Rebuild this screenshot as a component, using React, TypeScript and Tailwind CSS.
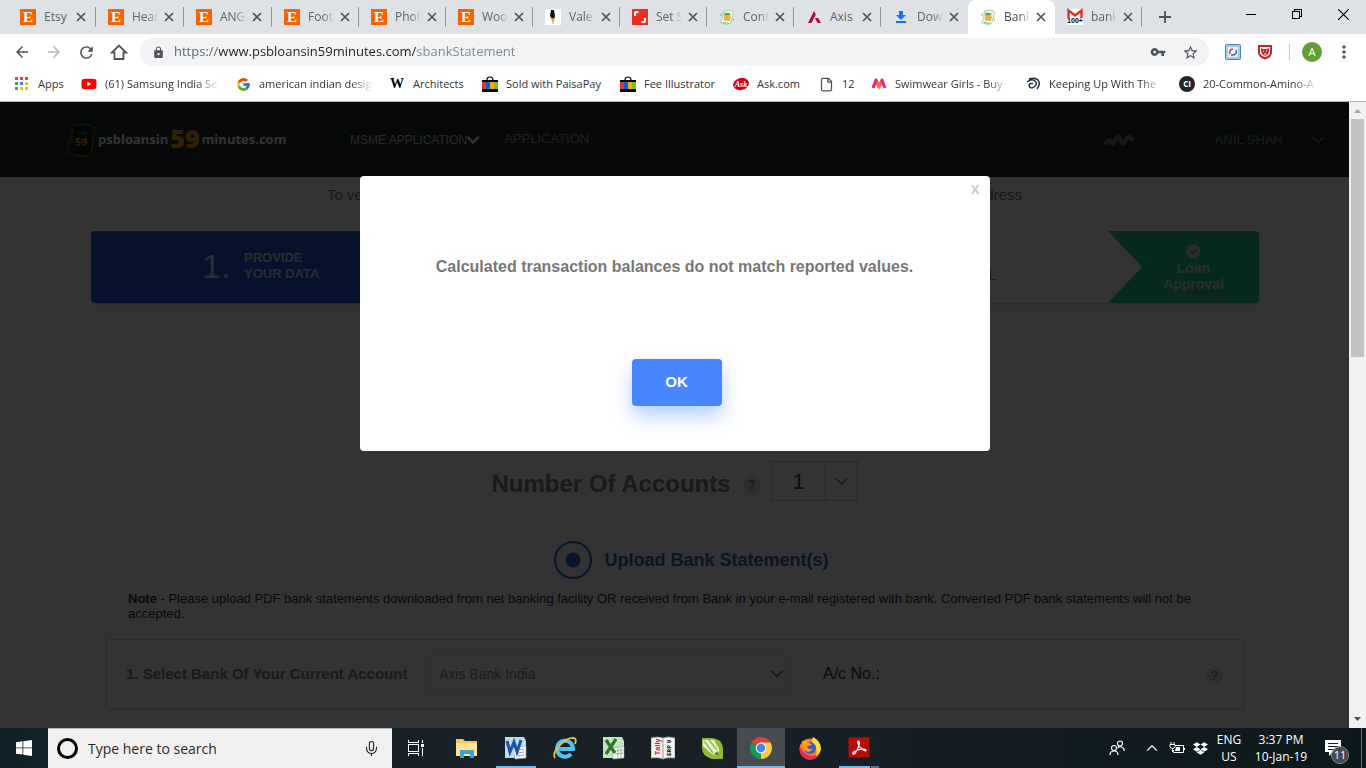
import React from "react";
import { ChevronDown, ChevronUp, File, Mic } from "lucide-react";
import { FcGoogle } from "react-icons/fc";
import { FaDropbox, FaYoutube } from "react-icons/fa";
import {
  MdArrowBack,
  MdArrowForward,
  MdLock,
  MdMoreVert,
  MdRefresh,
  MdStarBorder,
  MdVerified,
  MdVpnKey,
} from "react-icons/md";

function EtsyIcon() {
  return (
    <span className="flex size-4 items-center justify-center bg-[#f56400] font-['Liberation_Serif',serif] text-[15px] leading-4 font-bold text-white">
      E
    </span>
  );
}

function PenIcon() {
  return (
    <svg viewBox="0 0 16 16" className="size-4 bg-white">
      <path d="M6 1h3l1 6-1 3H7L5 7z" fill="#111" />
      <path d="M6 9h4l-1 3-1 4-1-4z" fill="#d9a441" />
    </svg>
  );
}

function ShutterIcon() {
  return (
    <svg viewBox="0 0 16 16" className="size-4 bg-[#ee2e24]">
      <path d="M6.500 3H4.500Q3 3 3 4.500V7M9.500 13h2q1.500 0 1.500-1.500V9" fill="none" stroke="#fff" strokeWidth="2.200" />
    </svg>
  );
}

function NotesIcon() {
  return (
    <svg viewBox="0 0 16 16" className="size-4">
      <path d="M4.500 2l6-1 4 1.500-1 6-2 6-4 1-6-2 2-4z" fill="#f3f7ea" stroke="#a5cc86" strokeWidth=".9" />
      <path d="M5 3.500l6.500.5-.5 8-6-.5z" fill="#a9bfa0" />
      <path d="M6 5l4.500.3" stroke="#3d9a51" strokeWidth="1.500" />
      <path d="M5 7h6.500v3H5z" fill="#f2b13b" />
      <path d="M2.500 4.500L1.500 7M14 9.500l.5 2M4 13.500l6 1" stroke="#7dbb5f" />
    </svg>
  );
}

function AxisIcon() {
  return (
    <svg viewBox="0 0 16 16" className="size-4">
      <path d="M8 2L2 14h3.500L9.800 5.500zM8.800 9h3.400L15 14h-3.400z" fill="#ae0a4b" />
    </svg>
  );
}

function DownloadIcon() {
  return (
    <svg viewBox="0 0 16 16" className="size-4">
      <path d="M6 2h4v4h3l-5 5-5-5h3zM3 12h10v2H3z" fill="#1a73e8" />
    </svg>
  );
}

function GmailIcon() {
  return (
    <svg viewBox="0 0 16 16" className="size-4 overflow-visible">
      <rect x="0" y="0" width="16" height="16" fill="#fff" />
      <path d="M1.500 9V1.500L8 6.500l6.500-5V9" fill="none" stroke="#d93025" strokeWidth="2.400" />
      <text x="8" y="14" textAnchor="middle" fontSize="7" fontWeight="700" fontFamily="Liberation Sans, sans-serif" fill="#000">
        100+
      </text>
    </svg>
  );
}

const tabs: { title: string; icon: React.ReactNode; active?: boolean; fade?: boolean }[] = [
  { title: "Etsy", icon: <EtsyIcon /> },
  { title: "Hear", icon: <EtsyIcon />, fade: true },
  { title: "ANG", icon: <EtsyIcon />, fade: true },
  { title: "Foot", icon: <EtsyIcon />, fade: true },
  { title: "Phot", icon: <EtsyIcon />, fade: true },
  { title: "Woo", icon: <EtsyIcon />, fade: true },
  { title: "Vale", icon: <PenIcon />, fade: true },
  { title: "Set S", icon: <ShutterIcon />, fade: true },
  { title: "Cont", icon: <NotesIcon />, fade: true },
  { title: "Axis", icon: <AxisIcon /> },
  { title: "Dow", icon: <DownloadIcon />, fade: true },
  { title: "Bank", icon: <NotesIcon />, active: true, fade: true },
  { title: "bank", icon: <GmailIcon />, fade: true },
];

function TabStrip() {
  return (
    <div className="flex h-[34px] items-stretch bg-[#dee1e6] pl-2">
      {tabs.map((tab, i) => (
        <div
          key={i}
          className={`flex shrink-0 items-center pl-3 ${i < 3 ? "w-[88px]" : "w-[87px]"} ${
            tab.active ? "rounded-t-lg bg-white" : ""
          }`}
        >
          {tab.icon}
          <span
            className={`ml-2 w-[26px] shrink-0 overflow-hidden text-[12px] whitespace-nowrap ${
              tab.fade ? "[mask-image:linear-gradient(to_right,black_60%,transparent)]" : ""
            } ${tab.active ? "text-[#45484c]" : "text-[#5f6368]"}`}
          >
            {tab.title}
          </span>
          <button aria-label={`Close ${tab.title}`} className="ml-[6px] flex size-[10px] items-center justify-center">
            <svg viewBox="0 0 10 10" className="size-[10px]">
              <path d="M1 1l8 8M9 1l-8 8" stroke="#505357" strokeWidth="1.700" />
            </svg>
          </button>
          {!tab.active && i !== 10 && <span className="ml-auto h-5 w-px bg-[#92969b]" />}
        </div>
      ))}
      <button aria-label="New tab" className="ml-[17px] flex items-center">
        <svg viewBox="0 0 12 12" className="size-3">
          <path d="M6 0v12M0 6h12" stroke="#505357" strokeWidth="1.800" />
        </svg>
      </button>
      <div className="ml-auto flex h-7">
        <button aria-label="Minimize" className="flex w-[46px] items-center justify-center">
          <span className="h-px w-[10px] bg-black" />
        </button>
        <button aria-label="Restore" className="flex w-[46px] items-center justify-center">
          <svg viewBox="0 0 10 10" className="size-[10px]" shapeRendering="crispEdges">
            <path d="M.5 2.500h7v7h-7zM2.500 2.500v-2h7v7h-2" fill="none" stroke="#000" />
          </svg>
        </button>
        <button aria-label="Close window" className="flex w-[46px] items-center justify-center">
          <svg viewBox="0 0 10 10" className="size-[11px]">
            <path d="M0 0l10 10M10 0L0 10" stroke="#000" strokeWidth="1.100" />
          </svg>
        </button>
      </div>
    </div>
  );
}

function Toolbar() {
  return (
    <div className="flex h-9 items-center bg-white pr-3 pl-[13px] text-[#505357]">
      <div className="flex gap-[14px]">
        <button aria-label="Back">
          <MdArrowBack size={18} />
        </button>
        <button aria-label="Forward" className="text-[#b5b7ba]">
          <MdArrowForward size={18} />
        </button>
        <button aria-label="Reload">
          <MdRefresh size={19} />
        </button>
        <button aria-label="Home">
          <svg viewBox="0 0 18 18" className="size-[18px]">
            <path d="M2 9.500L9 2.500l7 7h-2.500V16h-9V9.500z" fill="none" stroke="currentColor" strokeWidth="1.800" />
          </svg>
        </button>
      </div>
      <div className="ml-3 flex h-7 flex-1 items-center rounded-full bg-[#f1f3f4] pr-[10px] pl-3">
        <MdLock size={13} />
        <input
          aria-label="Address"
          readOnly
          value="https://www.psbloansin59minutes.com/sbankStatement"
          className="ml-[9px] flex-1 bg-[linear-gradient(to_right,#5f6368_45px,#202124_45px,#202124_242px,#80868b_242px)] bg-clip-text text-[13px] text-transparent outline-none"
        />
        <button aria-label="Saved passwords">
          <MdVpnKey size={16} />
        </button>
        <button aria-label="Bookmark this page" className="ml-4">
          <MdStarBorder size={17} />
        </button>
      </div>
      <button aria-label="Page refresh extension" className="ml-4">
        <svg viewBox="0 0 16 16" className="size-4">
          <rect x=".5" y=".5" width="15" height="15" rx="1" fill="#a9cbe8" stroke="#5580a8" />
          <rect x="3" y="3" width="10" height="10" fill="#e5f1fb" />
          <path d="M5 10a3.400 3.400 0 0 1 3-5" fill="none" stroke="#d33" strokeWidth="1.500" />
          <path d="M11 6a3.400 3.400 0 0 1-3 5H6" fill="none" stroke="#236bc4" strokeWidth="1.500" />
        </svg>
      </button>
      <button aria-label="Shield extension" className="ml-4">
        <svg viewBox="0 0 16 16" className="size-4">
          <path d="M1 1h14v8q-1 5-7 6.500Q2 14 1 9z" fill="#c9252b" />
          <path d="M3 3h10v6q-1 3-5 4-4-1-5-4z" fill="#fff" />
          <path d="M4 4l2 1h4l2-1v3l-1 3-3 2-3-2-1-3z" fill="#c9252b" />
          <path d="M6 7h1M9 7h1M7 10h2" stroke="#fff" />
        </svg>
      </button>
      <span className="ml-4 h-4 w-px bg-[#c9ccd0]" />
      <button className="ml-3 size-5 rounded-full bg-[#5f9f34] text-[11px] leading-5 text-white">A</button>
      <button aria-label="Menu" className="ml-3">
        <MdMoreVert size={20} />
      </button>
    </div>
  );
}

function AppsIcon() {
  const colors = ["#e94235", "#e94235", "#e94235", "#34a853", "#4285f4", "#fbbc05", "#34a853", "#fbbc05", "#fbbc05"];
  return (
    <svg viewBox="0 0 16 16" className="size-4" shapeRendering="crispEdges">
      {colors.map((c, i) => (
        <rect key={i} x={1 + (i % 3) * 5} y={1 + Math.floor(i / 3) * 5} width="3" height="3" fill={c} />
      ))}
    </svg>
  );
}

function BagIcon() {
  return (
    <svg viewBox="0 0 16 16" className="size-4">
      <path d="M5 4q0-3 3-3t3 3" fill="none" stroke="#000" strokeWidth="1.200" />
      <path d="M0 4h16v12H0z" fill="#000" />
      <path d="M0 6h4v7H0z" fill="#e53238" />
      <path d="M4 6h4v7H4z" fill="#0064d2" />
      <path d="M8 6h4v7H8z" fill="#f5af02" />
      <path d="M12 6h4v7h-4z" fill="#86b817" />
    </svg>
  );
}

function AskIcon() {
  return (
    <svg viewBox="0 0 16 16" className="size-4">
      <ellipse cx="8" cy="8" rx="8" ry="6" fill="#d0021b" transform="rotate(-14 8 8)" />
      <text x="8" y="11" textAnchor="middle" fontSize="8" fontWeight="700" fontStyle="italic" fontFamily="Liberation Serif, serif" fill="#fff">
        Ask
      </text>
    </svg>
  );
}

function MyntraIcon() {
  return (
    <svg viewBox="0 0 16 16" className="size-4">
      <path d="M2 12L5 4l3 7" fill="none" stroke="#e6207d" strokeWidth="3" strokeLinejoin="round" />
      <path d="M8 11l3-7 3 8" fill="none" stroke="#f01fa0" strokeWidth="3" strokeLinejoin="round" />
      <path d="M6 6l2 5 2-5" fill="none" stroke="#f7752e" strokeWidth="2.500" />
    </svg>
  );
}

function SwirlIcon() {
  return (
    <svg viewBox="0 0 16 16" className="size-4" fill="none" stroke="#1f2a44" strokeWidth="1.500">
      <path d="M4 3q6-2 9 1 3 4-1 9M2 6q5-4 8-1t-1 6q-3 2-4.500-.500T6 7.500h2" />
    </svg>
  );
}

const bookmarks = [
  { label: "Apps", width: "w-[67px]", icon: <AppsIcon /> },
  { label: "(61) Samsung India Se", width: "w-[154px]", icon: <FaYoutube size={16} color="#f00" />, fade: true },
  { label: "american indian design", width: "w-[154px]", icon: <FcGoogle size={15} />, fade: true },
  {
    label: "Architects",
    width: "w-[93px]",
    icon: <span className="font-['Liberation_Serif',serif] text-[14px] leading-4 font-bold text-black">W</span>,
  },
  { label: "Sold with PaisaPay", width: "w-[138px]", icon: <BagIcon /> },
  { label: "Fee Illustrator", width: "w-[113px]", icon: <BagIcon /> },
  { label: "Ask.com", width: "w-[85px]", icon: <AskIcon /> },
  { label: "12", width: "w-[53px]", icon: <File size={15} strokeWidth={2} color="#505357" /> },
  { label: "Swimwear Girls - Buy", width: "w-[154px]", icon: <MyntraIcon />, fade: true },
  { label: "Keeping Up With The", width: "w-[154px]", icon: <SwirlIcon />, fade: true },
  {
    label: "20-Common-Amino-A",
    width: "w-[141px]",
    icon: (
      <span className="flex size-4 items-center justify-center rounded-full bg-[#222529] text-[8px] font-bold text-white">
        CI
      </span>
    ),
    fade: true,
  },
];

function BookmarksBar() {
  return (
    <nav className="flex h-8 items-center border-b border-[#b6b6b6] bg-white pb-[3px] pl-[14px] text-[11px] text-[#303336]">
      {bookmarks.map((b) => (
        <a key={b.label} href="#" className={`flex shrink-0 items-center gap-2 ${b.width}`}>
          <span className="flex w-4 shrink-0 justify-center">{b.icon}</span>
          <span
            className={
              b.fade
                ? "w-[114px] overflow-hidden whitespace-nowrap [mask-image:linear-gradient(to_right,black_80%,transparent)]"
                : "whitespace-nowrap"
            }
          >
            {b.label}
          </span>
        </a>
      ))}
    </nav>
  );
}

function SiteHeader() {
  return (
    <header className="flex h-[75px] items-center bg-[#1e2d28] pr-[21px] pl-[66px] text-[#ccc]">
      <a href="#" className="flex w-[220px] items-center font-['Open_Sans',sans-serif] text-[13px] font-bold text-white">
        <svg viewBox="0 0 30 36" className="h-9 w-[30px] shrink-0">
          <path d="M5 4l16-2 8 4-4 26-10 3L1 31 7 8z" fill="none" stroke="#5c8c32" />
          <path d="M14 1l12 4M2 12l4-4M26 22l2 2M3 17l3-3M24 26l3-2M8 30l8 4" stroke="#5c8c32" />
          <rect x="8" y="4" width="17" height="28" fill="#101a1c" />
          <text x="16" y="13" textAnchor="middle" fontSize="5" fontWeight="700" fill="#1c8040">
            PSB
          </text>
          <text x="15" y="24" textAnchor="middle" fontSize="11" fontWeight="700" fill="#f59a00">
            59
          </text>
        </svg>
        <span className="ml-[2px]">psbloansin</span>
        <span className="mx-[2px] pb-1 text-[25px] leading-8 font-extrabold text-[#ffa000]">59</span>
        <span>minutes.com</span>
      </a>
      <a href="#" className="ml-16 flex items-center text-[12px]">
        MSME APPLICATION
        <ChevronDown size={20} strokeWidth={3} className="-ml-1 text-white" />
      </a>
      <a href="#" className="ml-2 border-l border-[#2a3a35] pb-[2px] pl-3 text-[13px] leading-4 text-[#999]">
        APPLICATION
      </a>
      <svg viewBox="0 0 30 14" className="ml-auto h-[14px] w-[30px]">
        <path d="M2 10l4-3 3 4 5-8 5 8 6-8 3 3" fill="none" stroke="#777" strokeWidth="4" strokeLinecap="round" strokeLinejoin="round" />
      </svg>
      <button className="ml-[81px] flex items-center gap-[25px] text-[13px] text-[#7c7c9f]">
        ANIL SHAH
        <ChevronDown size={20} strokeWidth={2} />
      </button>
    </header>
  );
}

function Steps() {
  return (
    <ol className="mt-[27px] mr-[90px] ml-[91px] flex h-[72px] overflow-hidden rounded bg-white text-[14px] leading-4 shadow-[0_1px_2px_#8888]">
      <li className="flex w-1/3 items-center bg-linear-to-b from-[#205ac8] to-[#205ae1] pb-[2px] pl-[111px] text-[13px] leading-4 font-bold text-[#ddd]">
        <span className="w-[42px] text-[34px] font-normal">1.</span>
        <span>
          PROVIDE
          <br />
          YOUR DATA
        </span>
      </li>
      <li className="flex flex-1 items-center justify-end pr-[112px] text-[#777]">
        <span>
          GET
          <br />
          APPROVAL
        </span>
      </li>
      <li className="flex w-[151px] flex-col items-center justify-center bg-[#1ecd8c] pl-5 text-center font-bold text-[#ddd] [clip-path:polygon(0_0,100%_0,100%_100%,0_100%,34px_50%)]">
        <MdVerified size={17} />
        <span>
          Loan
          <br />
          Approval
        </span>
      </li>
    </ol>
  );
}

function Help() {
  return (
    <button
      aria-label="Help"
      className="size-[18px] rounded-full bg-[#e6e6e6] text-center text-[12px] leading-[18px] text-[#777]"
    >
      ?
    </button>
  );
}

function SitePage() {
  return (
    <div className="bg-white">
      <SiteHeader />
      <p className="mx-auto mt-[10px] flex h-[17px] max-w-[695px] items-center justify-between text-[15px] text-[#777]">
        <span>To verify</span>
        <span>address</span>
      </p>
      <Steps />
      <div className="mt-[158px] flex items-start justify-center">
        <label htmlFor="accounts" className="pt-[9px] text-[24px] leading-7 font-bold text-[#808080]">
          Number Of Accounts
        </label>
        <span className="mt-[15px] mr-[10px] ml-3 flex font-bold">
          <Help />
        </span>
        <div className="grid h-10 w-[87px] grid-cols-[53px_32px] border border-[#c8c8c8]">
          <select
            id="accounts"
            className="col-span-2 col-start-1 row-start-1 appearance-none pl-[21px] text-[22px] text-[#444] outline-none"
          >
            <option>1</option>
          </select>
          <span className="pointer-events-none col-start-2 row-start-1 flex items-center justify-center border-l border-[#c8c8c8] text-[#666]">
            <ChevronDown size={21} strokeWidth={1.500} />
          </span>
        </div>
      </div>
      <div className="mt-10 flex justify-center">
        <label className="ml-[34px] flex items-center gap-3 text-[18px] font-bold text-[#3268c8]">
          <input
            type="radio"
            name="source"
            defaultChecked
            className="size-[38px] appearance-none rounded-full border-2 border-[#3268d8] bg-[radial-gradient(circle,#3268d8_7px,transparent_8px)]"
          />
          Upload Bank Statement(s)
        </label>
      </div>
      <p className="mr-32 ml-[128px] pt-3 text-[13px] leading-[15px] text-[#333]">
        <b>Note</b> - Please upload PDF bank statements downloaded from net banking facility OR received from Bank in
        your e-mail registered with bank. Converted PDF bank statements will not be accepted.
      </p>
      <section className="mt-[18px] mr-[105px] ml-[106px] flex h-[70px] items-center rounded border border-[#d4d4d4] pr-5 pl-[19px] shadow-[0_1px_3px_#aaa8]">
        <label htmlFor="bank" className="w-[302px] text-[15px] font-bold whitespace-nowrap text-[#808080]">
          1. Select Bank Of Your Current Account
        </label>
        <div className="grid w-[363px] items-center">
          <select
            id="bank"
            className="col-start-1 row-start-1 h-[38px] w-full appearance-none border border-[#ececec] pl-[10px] text-[14px] text-[#909090]"
          >
            <option>Axis Bank India</option>
          </select>
          <ChevronDown
            size={20}
            strokeWidth={2}
            className="pointer-events-none col-start-1 row-start-1 mr-1 justify-self-end text-[#666]"
          />
        </div>
        <span className="ml-8 text-[16px] text-[#333]">A/c No.:</span>
        <span className="ml-auto flex pt-1">
          <Help />
        </span>
      </section>
      <div className="mr-[104px] ml-[105px] h-12 border-x border-[#f0f0f0]" />
    </div>
  );
}

function AlertDialog() {
  return (
    <div className="absolute inset-0 flex items-start justify-center bg-black/80 pt-[74px]">
      <div
        role="dialog"
        aria-modal="true"
        aria-label="Message"
        className="flex h-[275px] w-[630px] flex-col items-center rounded bg-white"
      >
        <button aria-label="Close message" className="mt-1 mr-[10px] self-end text-[13px] leading-5 font-bold text-[#c8c8c8]">
          X
        </button>
        <p className="mt-[57px] text-[16px] leading-5 font-bold text-[#777]">
          Calculated transaction balances do not match reported values.
        </p>
        <button className="mt-[82px] ml-1 h-[47px] w-[90px] rounded bg-[#4886ff] text-[15px] font-bold text-white shadow-[0_10px_20px_#4886ff66]">
          OK
        </button>
      </div>
    </div>
  );
}

function ScrollBar() {
  return (
    <div className="flex w-[17px] shrink-0 flex-col items-center bg-[#f1f1f1]">
      <svg viewBox="0 0 17 17" className="size-[17px]">
        <path d="M5 11h7L8.500 7z" fill="#a3a3a3" />
      </svg>
      <div className="h-[238px] w-[13px] bg-[#c1c1c1]" />
      <svg viewBox="0 0 17 17" className="mt-auto size-[17px]">
        <path d="M5 6h7l-3.500 4z" fill="#505050" />
      </svg>
    </div>
  );
}

const taskApps: { name: string; icon: React.ReactNode; mark?: "running" | "focused" | "stacked" }[] = [
  {
    name: "File Explorer",
    icon: (
      <svg viewBox="0 0 24 24" className="size-6">
        <path d="M1 3h7l2 2h12v15H1z" fill="#f0c75e" />
        <path d="M1 7h21v13H1z" fill="#ffe391" />
        <path d="M5 14h14v8h-4v-4H9v4H5z" fill="#33a5dd" />
      </svg>
    ),
  },
  {
    name: "Word",
    mark: "running",
    icon: (
      <svg viewBox="0 0 24 24" className="size-6">
        <path d="M1 1h19l2 4v17H1z" fill="#c3daf3" />
        <path d="M9 12l13-2v12l-11 1z" fill="#fff" stroke="#9ab" strokeWidth=".6" />
        <path d="M14 14l6-1M14 17l6-1M14 20l6-1" stroke="#8aa6c8" />
        <path d="M3 5l3 11 4-10 3 10 4-12" fill="none" stroke="#1d55a5" strokeWidth="3" />
      </svg>
    ),
  },
  {
    name: "Internet Explorer",
    icon: (
      <svg viewBox="0 0 24 24" className="size-6">
        <path d="M6 13h14a8 8 0 1 0-2 5" fill="none" stroke="#4fc3f5" strokeWidth="4" />
        <path d="M2 22Q-1 17 7 9t14-7q3 1 1 6" fill="none" stroke="#f3c12b" strokeWidth="1.800" />
      </svg>
    ),
  },
  {
    name: "Excel",
    icon: (
      <svg viewBox="0 0 24 24" className="size-6">
        <path d="M1 1h19l2 4v17H1z" fill="#c6e3bf" />
        <path d="M10 12l12-2v12l-11 1z" fill="#fff" stroke="#8a8" strokeWidth=".6" />
        <path d="M13 15l8-1M13 18l8-1M16 11v11M19 11v11" stroke="#79a66f" strokeWidth=".8" />
        <path d="M4 4l9 13M14 3L4 18" stroke="#2b7a2b" strokeWidth="3.200" />
      </svg>
    ),
  },
  {
    name: "Tally ERP 9",
    icon: (
      <svg viewBox="0 0 24 24" className="size-6">
        <path d="M0 2q7-2 12 0 5-2 12 0v20q-8-1-12 1-4-2-12-1z" fill="#f4f4f4" stroke="#999" strokeWidth=".8" />
        <path d="M12 2v20" stroke="#999" />
        <text transform="translate(9 19) rotate(-90)" fontSize="7" fontWeight="700" fill="#d32020">
          Tally
        </text>
        <text transform="translate(20 20) rotate(-90)" fontSize="6" fontWeight="700" fill="#111">
          ERP 9
        </text>
      </svg>
    ),
  },
  {
    name: "CorelDRAW",
    icon: (
      <svg viewBox="0 0 24 24" className="size-6">
        <path d="M2 2h10q11 1 11 12v9H12Q2 20 2 12z" fill="#8dbb3c" />
        <path d="M3 4l11 0 5 9 0 7-7-2-9-8z" fill="#e9f4d2" />
        <path d="M4 5l9 12M9 4l8 10" stroke="#8dbb3c" strokeWidth="1.500" />
        <path d="M14 18l5 2-1-5z" fill="#57811b" />
      </svg>
    ),
  },
  {
    name: "Chrome",
    mark: "focused",
    icon: (
      <svg viewBox="0 0 24 24" className="size-6">
        <path d="M12 12L2.500 6.500A11 11 0 0 1 21.500 6.500z" fill="#db4437" />
        <path d="M12 12l9.500-5.500A11 11 0 0 1 12 23z" fill="#ffcd40" />
        <path d="M12 12v11A11 11 0 0 1 2.500 6.500z" fill="#0f9d58" />
        <path d="M12 6.500h9.500L17 14l-5 9 2-8z" fill="#ffcd40" />
        <circle cx="12" cy="12" r="5.400" fill="#f1f1f1" />
        <circle cx="12" cy="12" r="4.200" fill="#4285f4" />
      </svg>
    ),
  },
  {
    name: "Firefox",
    icon: (
      <svg viewBox="0 0 24 24" className="size-6">
        <circle cx="12" cy="13" r="10.500" fill="#ff7d1a" />
        <path d="M2 9q-2 10 6 14 10 3 14-6-8 6-15 0T2 9z" fill="#ec2b55" />
        <path d="M15 1q8 4 8 12-1 5-5 7 2-8-2-11-3-4-1-8z" fill="#ffe13a" />
        <circle cx="12" cy="12" r="6" fill="#3c5fd0" />
        <path d="M4 5q4-1 6 1l4 3-5 1q1 4 6 3-3 4-7 2-4-3-4-10z" fill="#ff9c1c" />
      </svg>
    ),
  },
  {
    name: "Adobe Reader",
    mark: "stacked",
    icon: (
      <svg viewBox="0 0 24 24" className="size-6">
        <rect x="1.500" y="1.500" width="21" height="20" fill="#b50f0b" />
        <path d="M11 5q3 0 0 7-3 7-5 6-1-2 5-4t8 0q0 2-4-1-5-4-4-8z" fill="none" stroke="#fff" strokeWidth="1.200" />
      </svg>
    ),
  },
];

function TaskBar() {
  return (
    <footer className="flex h-10 shrink-0 items-stretch bg-linear-to-r from-[#12222b] via-[#1a2126] to-[#0b191d] text-white">
      <button aria-label="Start" className="flex w-12 items-center justify-center">
        <svg viewBox="0 0 16 16" className="size-4">
          <path d="M0 2.200l6.500-.9v6.200H0zM7.300 1.200L16 0v7.500H7.300zM0 8.300h6.500v6.300L0 13.700zM7.300 8.300H16V16l-8.700-1.200z" fill="#fff" />
        </svg>
      </button>
      <label className="flex w-[344px] items-center border-t border-[#b8b8b8] bg-[#f0f0f0] pr-3 pl-[9px] text-[#222]">
        <span className="size-[21px] shrink-0 rounded-full border-3 border-black" />
        <input
          aria-label="Search"
          placeholder="Type here to search"
          className="ml-[10px] min-w-0 flex-1 text-[14px] outline-none placeholder:text-[#2b2b2b]"
        />
        <Mic size={17} strokeWidth={1.500} />
      </label>
      <button aria-label="Task view" className="flex w-12 items-center justify-center">
        <svg viewBox="0 0 18 16" className="h-4 w-[18px]" fill="none" stroke="#fff" shapeRendering="crispEdges">
          <path d="M1.500 0v2.500h10V0M1.500 16v-2.500h10V16M1.500 4.500h10v7h-10zM15.500 0v3M15.500 8v8" />
          <path d="M14 4h3v3h-3z" fill="#fff" stroke="none" />
        </svg>
      </button>
      <div className="ml-[3px] flex gap-px">
        {taskApps.map((app) => (
          <button
            key={app.name}
            aria-label={app.name}
            className={`flex w-12 flex-col items-center ${app.mark === "focused" ? "bg-[#464c50]" : ""}`}
          >
            <span className="flex h-[38px] items-center pt-[2px]">{app.icon}</span>
            {app.mark === "running" && <span className="h-[2px] w-10 bg-[#76b9ed]" />}
            {app.mark === "focused" && <span className="h-[2px] w-12 bg-[#76b9ed]" />}
            {app.mark === "stacked" && (
              <span className="flex h-[2px] w-10 gap-px">
                <span className="flex-1 bg-[#76b9ed]" />
                <span className="w-2 bg-[#4d7899]" />
              </span>
            )}
          </button>
        ))}
      </div>
      <div className="ml-auto flex items-center text-[12px]">
        <button aria-label="People" className="mr-[18px]">
          <svg viewBox="0 0 16 16" className="size-4" fill="none" stroke="#fff" strokeWidth="1.200">
            <circle cx="11" cy="3.500" r="2.500" />
            <path d="M8.500 8q3-3 6.500 1v2" />
            <circle cx="5" cy="8" r="2.500" />
            <path d="M1 15q0-4 4-4t4 4" />
          </svg>
        </button>
        <button aria-label="Hidden icons" className="mr-2">
          <ChevronUp size={18} strokeWidth={1.500} />
        </button>
        <svg viewBox="0 0 16 14" className="mr-2 h-[14px] w-4" fill="none" stroke="#fff">
          <path d="M6 4.500h8.500v7H4.500V9M15.500 7v2M1 3.500h5v2q-.5 2-2.500 2T1 5.500zM2 3V1M5 3V1M3.500 7.500V11" />
          <path d="M7 6h4v4H6z" fill="#fff" stroke="none" />
        </svg>
        <FaDropbox size={15} />
        <button className="ml-[5px] w-8 text-center leading-[17px]">
          ENG
          <br />
          US
        </button>
        <button className="ml-1 w-16 text-center leading-[17px] whitespace-nowrap">
          3:37 PM
          <br />
          10-Jan-19
        </button>
        <button aria-label="Notifications" className="relative mr-3 ml-3 size-6">
          <svg viewBox="0 0 24 24" className="size-6">
            <path d="M0 4h16v12H8l-4 4v-4H0z" fill="#fff" />
            <path d="M3 7.500h10M3 10.500h10M3 13.500h6" stroke="#142025" />
          </svg>
          <span className="absolute top-[11px] left-[7px] size-4 rounded-full bg-[#454b50] text-[11px] leading-4 outline outline-[#8a8f92]">
            11
          </span>
        </button>
        <span className="mr-1 h-10 w-px bg-[#66737a]" />
      </div>
    </footer>
  );
}

export default function App() {
  return (
    <div className="flex h-screen flex-col overflow-hidden font-['Open_Sans','Noto_Sans',sans-serif]">
      <TabStrip />
      <Toolbar />
      <BookmarksBar />
      <main className="flex min-h-0 flex-1">
        <div className="relative min-w-0 flex-1 overflow-hidden font-['Liberation_Sans',Arial,sans-serif]">
          <SitePage />
          <AlertDialog />
        </div>
        <ScrollBar />
      </main>
      <TaskBar />
    </div>
  );
}
